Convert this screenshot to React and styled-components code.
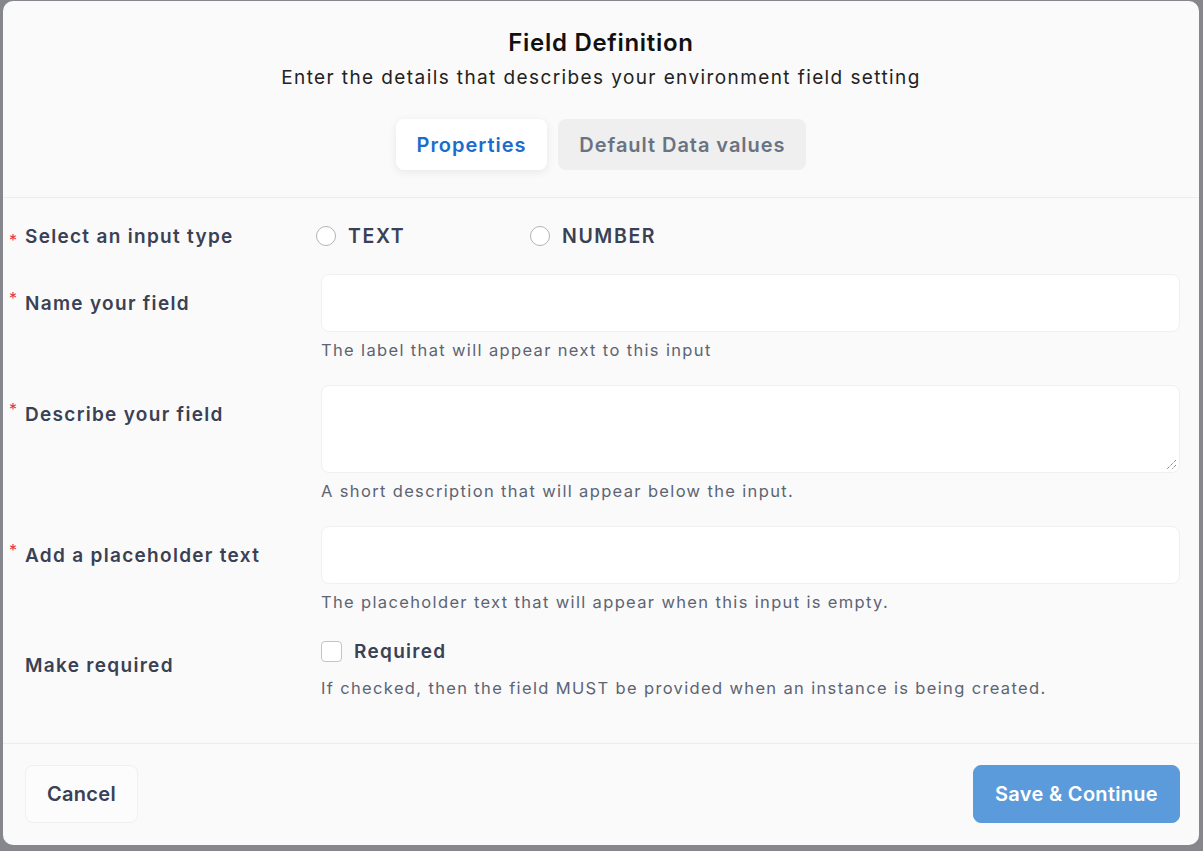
import React from 'react';
import styled, { createGlobalStyle } from 'styled-components';

const GlobalStyle = createGlobalStyle`
  html, body {
    margin: 0;
    padding: 0;
    background: #86878d;
    font-family: Inter, "Noto Sans", "Liberation Sans", sans-serif;
  }
  * {
    box-sizing: border-box;
  }
`;

const Backdrop = styled.div`
  width: 1203px;
  height: 851px;
  padding: 1px 4px 6px 3px;
`;

const Modal = styled.div`
  width: 100%;
  height: 100%;
  background: #fafafa;
  border-radius: 10px;
  display: flex;
  flex-direction: column;
  overflow: hidden;
`;

const Header = styled.div`
  display: flex;
  flex-direction: column;
  align-items: center;
  padding-top: 27px;
  height: 197px;
  border-bottom: 1px solid #ececec;
`;

const Title = styled.h1`
  margin: 0;
  font-size: 24px;
  line-height: 30px;
  font-weight: 600;
  color: #111;
  letter-spacing: 0.7px;
`;

const Subtitle = styled.p`
  margin: 7px 0 0;
  font-size: 19px;
  line-height: 26px;
  color: #222;
  letter-spacing: 1.4px;
`;

const Tabs = styled.div`
  display: flex;
  gap: 11px;
  margin-top: 28px;
`;

const Tab = styled.button`
  height: 51px;
  padding: 0 21px;
  border: none;
  border-radius: 8px;
  font-family: inherit;
  font-size: 20px;
  font-weight: 600;
  letter-spacing: 0.95px;
  cursor: pointer;
  background: ${(p) => (p.$active ? '#fff' : '#efefef')};
  color: ${(p) => (p.$active ? '#1a6dcc' : '#6b7280')};
  box-shadow: ${(p) => (p.$active ? '0 2px 8px rgba(0,0,0,0.08)' : 'none')};
`;

const Body = styled.div`
  flex: 1;
  padding: 9px 19px 0 2px;
`;

const Row = styled.div`
  display: grid;
  grid-template-columns: 316px 1fr;
  margin-top: ${(p) => p.$space || 0}px;
`;

const LabelCell = styled.div`
  display: flex;
  align-items: center;
  height: 58px;
`;

const Asterisk = styled.span`
  width: 20px;
  color: #e5334b;
  font-size: 16px;
  align-self: ${(p) => (p.$low ? 'center' : 'flex-start')};
  margin-top: ${(p) => (p.$low ? '8px' : '14px')};
  padding-left: 4px;
`;

const Label = styled.label`
  font-size: 19px;
  font-weight: 600;
  color: #3a4154;
  line-height: 24px;
  letter-spacing: 1.3px;
  margin-left: ${(p) => (p.$plain ? '20px' : '0')};
  margin-top: ${(p) => (p.$plain ? '5px' : '1px')};
`;

const Control = styled.div`
  display: flex;
  flex-direction: column;
`;

const RadioGroup = styled.div`
  display: flex;
  align-items: center;
  height: 58px;
  margin-left: -5px;
`;

const RadioOption = styled.label`
  display: flex;
  align-items: center;
  gap: 12px;
  width: 214px;
  font-size: 19.5px;
  font-weight: 600;
  color: #3a4154;
  letter-spacing: 1.6px;
`;

const RadioCircle = styled.span`
  width: 20px;
  height: 20px;
  border-radius: 50%;
  border: 1px solid #b4b4b4;
  background: #fff;
`;

const Input = styled.div`
  height: ${(p) => (p.$tall ? 88 : 58)}px;
  background: #fff;
  border: 1px solid #f0f0f0;
  border-radius: 8px;
  position: relative;
`;

const Grip = styled.svg`
  position: absolute;
  right: 2px;
  bottom: 2px;
`;

const Help = styled.p`
  margin: ${(p) => p.$top || 8}px 0 0;
  font-size: 16.5px;
  line-height: 20px;
  color: #5d6472;
  letter-spacing: 1.35px;
`;

const CheckRow = styled.label`
  display: flex;
  align-items: center;
  gap: 12px;
  height: 34px;
  font-size: 19px;
  font-weight: 600;
  color: #3a4154;
  letter-spacing: 1.3px;
`;

const Box = styled.span`
  width: 21px;
  height: 21px;
  border-radius: 4px;
  border: 1px solid #c4c4c4;
  background: #fff;
`;

const Footer = styled.div`
  display: flex;
  justify-content: space-between;
  align-items: flex-start;
  border-top: 1px solid #ececec;
  height: 102px;
  padding: 21px 19px 0 22px;
`;

const Button = styled.button`
  height: 58px;
  padding: 0 21px;
  border-radius: 8px;
  font-family: inherit;
  font-size: 20px;
  font-weight: 600;
  letter-spacing: 0.3px;
  cursor: pointer;
  border: 1px solid ${(p) => (p.$primary ? '#5b9bdb' : '#f0f0f0')};
  background: ${(p) => (p.$primary ? '#5b9bdb' : '#fcfcfc')};
  color: ${(p) => (p.$primary ? '#fff' : '#3a4154')};
`;

function TextField({ label, help, tall, space }) {
  return (
    <Row $space={space}>
      <LabelCell>
        <Asterisk>*</Asterisk>
        <Label>{label}</Label>
      </LabelCell>
      <Control>
        <Input $tall={tall}>
          {tall && (
            <Grip width="12" height="12" viewBox="0 0 12 12">
              <path d="M11 2 L2 11 M11 7 L7 11" stroke="#555" strokeWidth="1" strokeDasharray="1 1" />
            </Grip>
          )}
        </Input>
        <Help>{help}</Help>
      </Control>
    </Row>
  );
}

export default function App() {
  return (
    <Backdrop>
      <GlobalStyle />
      <Modal>
        <Header>
          <Title>Field Definition</Title>
          <Subtitle>Enter the details that describes your environment field setting</Subtitle>
          <Tabs>
            <Tab $active>Properties</Tab>
            <Tab>Default Data values</Tab>
          </Tabs>
        </Header>
        <Body>
          <Row>
            <LabelCell>
              <Asterisk $low>*</Asterisk>
              <Label>Select an input type</Label>
            </LabelCell>
            <RadioGroup>
              <RadioOption>
                <RadioCircle />
                TEXT
              </RadioOption>
              <RadioOption>
                <RadioCircle />
                NUMBER
              </RadioOption>
            </RadioGroup>
          </Row>
          <TextField space={9} label="Name your field" help="The label that will appear next to this input" />
          <TextField space={25} tall label="Describe your field" help="A short description that will appear below the input." />
          <TextField space={25} label="Add a placeholder text" help="The placeholder text that will appear when this input is empty." />
          <Row $space={22}>
            <LabelCell>
              <Label $plain>Make required</Label>
            </LabelCell>
            <Control>
              <CheckRow>
                <Box />
                Required
              </CheckRow>
              <Help $top={10}>
                If checked, then the field MUST be provided when an instance is being created.
              </Help>
            </Control>
          </Row>
        </Body>
        <Footer>
          <Button>Cancel</Button>
          <Button $primary>Save &amp; Continue</Button>
        </Footer>
      </Modal>
    </Backdrop>
  );
}
